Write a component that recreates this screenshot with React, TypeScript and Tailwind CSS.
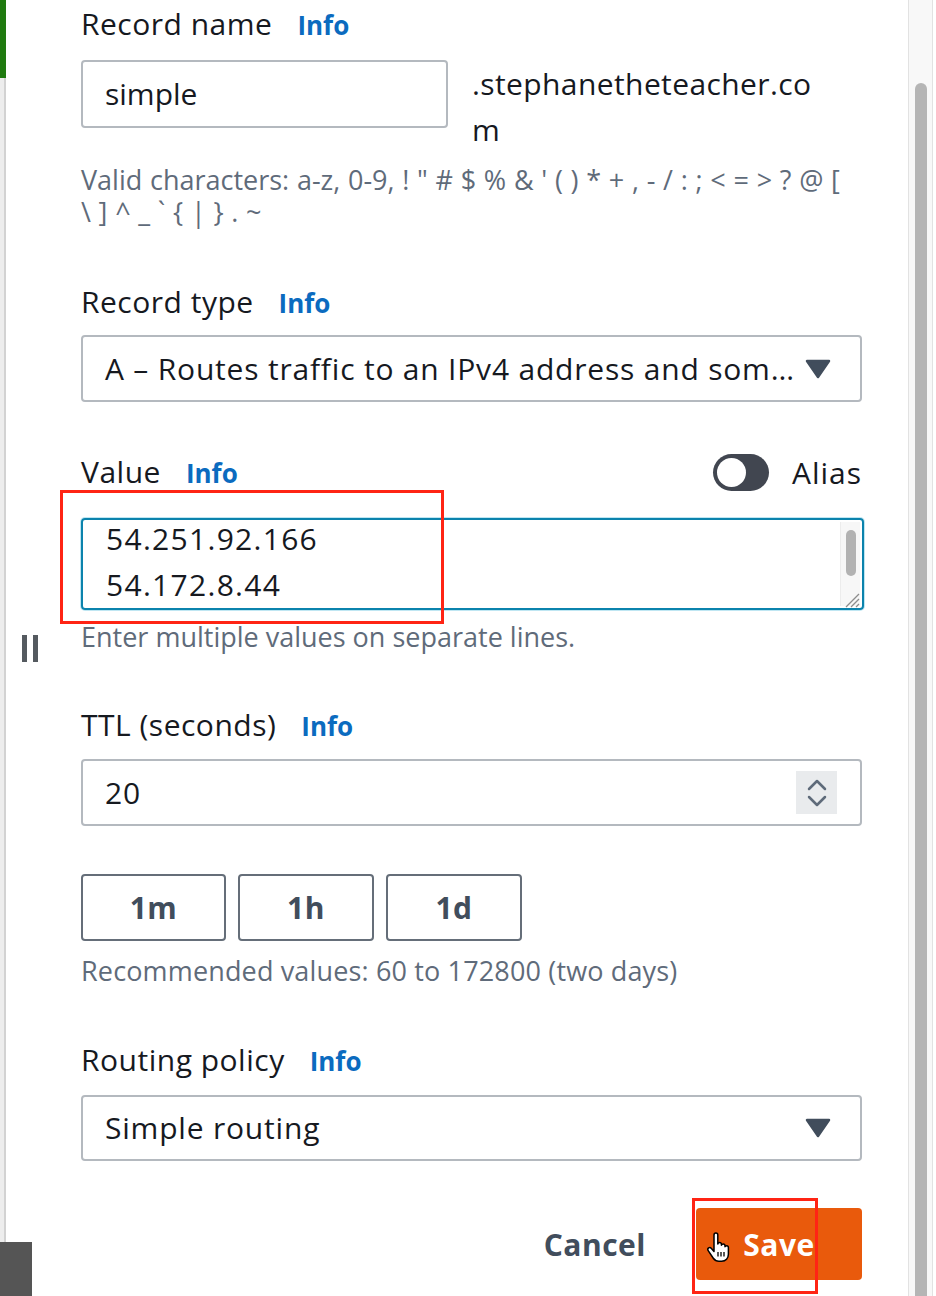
import type { ReactNode } from "react"

function Info() {
  return <span className="text-[26px] font-bold tracking-normal text-[#0b6bbf]">Info</span>
}

function Label({ children, className = "" }: { children: ReactNode; className?: string }) {
  return (
    <div className={`flex items-baseline gap-[25px] text-[30px] leading-[36px] text-[#16191f] ${className}`}>
      <span className="tracking-[0.5px]">{children}</span>
      <Info />
    </div>
  )
}

function Caret() {
  return (
    <svg width="26" height="20" viewBox="0 0 26 20" className="shrink-0">
      <polygon points="2,2 24,2 13,18" fill="#414d5c" stroke="#414d5c" strokeWidth="2.5" strokeLinejoin="round" />
    </svg>
  )
}

function Select({ text, className = "" }: { text: string; className?: string }) {
  return (
    <div
      className={`flex items-center justify-between rounded-[4px] border-2 border-[#b4b9bf] pl-[22px] pr-[29px] ${className}`}
    >
      <span className="whitespace-nowrap text-[30px] leading-[36px] tracking-[0.8px] text-[#16191f]">{text}</span>
      <Caret />
    </div>
  )
}

function Helper({ children, className = "" }: { children: ReactNode; className?: string }) {
  return <p className={`text-[27px] leading-[32px] text-[#5f6b7a] ${className}`}>{children}</p>
}

function HandCursor() {
  return (
    <svg width="26" height="30" viewBox="0 0 26 30" className="absolute left-[10px] top-[24px]">
      <path
        d="M8 3c0-1.2.9-2 1.9-2s1.9.8 1.9 2v9c.3-1 1-1.5 1.8-1.5 1 0 1.8.8 1.8 1.8v1c.3-.8 1-1.3 1.8-1.3 1 0 1.8.8 1.8 1.8v1c.3-.7 1-1.1 1.7-1.1 1 0 1.7.8 1.7 1.8v6.8c0 3.7-2.6 6.9-6.8 6.9h-2.7c-2.6 0-4.2-1-5.6-3L2.2 18.6c-.6-.9-.4-2.1.4-2.7.9-.6 2-.4 2.6.4L8 19.5z"
        fill="white"
        stroke="black"
        strokeWidth="1.5"
        strokeLinejoin="round"
      />
      <path d="M12 20v4.5M15 20v4.5M18 20v4.5" stroke="black" strokeWidth="1.3" />
    </svg>
  )
}

export default function App() {
  return (
    <div className="relative flex h-[1296px] w-[936px] overflow-hidden bg-white font-['Open_Sans',sans-serif]">
      {/* left gutter */}
      <div className="relative w-[81px] shrink-0">
        <div className="flex h-full w-[6px] flex-col">
          <div className="h-[78px] bg-[#1f7a0f]" />
          <div className="flex-1 border-r-2 border-[#d2d2d2] bg-[#ededed]" />
        </div>
        <div className="absolute left-[22px] top-[635px] flex gap-[6px]">
          <div className="h-[27px] w-[5px] bg-[#555a60]" />
          <div className="h-[27px] w-[5px] bg-[#555a60]" />
        </div>
        <div className="absolute bottom-0 left-0 h-[54px] w-[32px] bg-[#555555]" />
      </div>

      {/* form */}
      <div className="flex w-[781px] shrink-0 flex-col pt-[6px]">
        <Label>Record name</Label>
        <div className="mt-[17px] flex items-start gap-[24px]">
          <div className="flex h-[68px] w-[367px] items-center rounded-[4px] border-2 border-[#b4b9bf] pl-[22px]">
            <span className="text-[30px] leading-[36px] text-[#16191f]">simple</span>
          </div>
          <div className="pt-[1px] text-[30px] leading-[46px] tracking-[0.4px] text-[#16191f]">
            .stephanetheteacher.co
            <br />m
          </div>
        </div>
        <Helper className="mt-[11px] whitespace-nowrap [word-spacing:0.7px]">
          Valid characters: a-z, 0-9, ! " # $ % &amp; ' ( ) * + , - / : ; &lt; = &gt; ? @ [
          <br />
          \ ] ^ _ ` {"{"} | {"}"} . ~
        </Helper>

        <Label className="mt-[56px]">Record type</Label>
        <Select className="mt-[14px] h-[67px]" text="A – Routes traffic to an IPv4 address and som…" />

        <div className="mt-[52px] flex items-center justify-between">
          <Label>Value</Label>
          <div className="flex items-center gap-[23px]">
            <div className="flex h-[37px] w-[56px] items-center rounded-full bg-[#414650] pl-[4px]">
              <div className="h-[29px] w-[29px] rounded-full bg-white" />
            </div>
            <span className="text-[30px] leading-[36px] tracking-[1px] text-[#16191f]">Alias</span>
          </div>
        </div>
        <div className="relative mt-[27px]">
          <div className="flex h-[92px] w-[783px] overflow-hidden rounded-[4px] border-2 border-[#0b83ad] shadow-[0_0_0_1px_#bfe6f2]">
            <div className="-mt-[4px] flex-1 pl-[23px] text-[30px] leading-[46px] tracking-[1.3px] text-[#16191f]">
              <div>54.251.92.166</div>
              <div>54.172.8.44</div>
            </div>
            <div className="relative mr-[2px] mt-[2px] flex h-[84px] w-[20px] justify-center border-l border-[#ececec] bg-[#f7f7f7] pt-[8px]">
              <div className="h-[46px] w-[10px] rounded-full bg-[#b2b2b2]" />
              <svg width="20" height="20" viewBox="0 0 20 20" className="absolute -bottom-[2px] right-0">
                <path d="M19 6L6 19M19 11L11 19M19 16L16 19" stroke="#8d8d8d" strokeWidth="1.3" />
              </svg>
            </div>
          </div>
          <div className="absolute -left-[21px] -top-[28px] h-[134px] w-[384px] border-[3px] border-[#ff2414]" />
        </div>
        <Helper className="mt-[11px]">Enter multiple values on separate lines.</Helper>

        <Label className="mt-[54px]">TTL (seconds)</Label>
        <div className="mt-[15px] flex h-[67px] items-center justify-between rounded-[4px] border-2 border-[#b4b9bf] pl-[22px] pr-[23px]">
          <span className="text-[30px] leading-[36px] tracking-[0.8px] text-[#16191f]">20</span>
          <div className="flex h-[43px] w-[41px] items-center justify-center bg-[#e9ebed]">
            <svg width="20" height="30" viewBox="0 0 20 30">
              <path d="M2 11L10 3L18 11M2 19L10 27L18 19" fill="none" stroke="#5f6b7a" strokeWidth="2.5" strokeLinecap="round" strokeLinejoin="round" />
            </svg>
          </div>
        </div>

        <div className="mt-[48px] flex gap-[12px]">
          {[
            ["1m", "w-[145px]"],
            ["1h", "w-[136px]"],
            ["1d", "w-[136px]"],
          ].map(([t, w]) => (
            <div
              key={t}
              className={`flex h-[67px] items-center justify-center rounded-[4px] border-2 border-[#656e79] text-[30px] font-bold tracking-[0.5px] text-[#414d5c] ${w}`}
            >
              {t}
            </div>
          ))}
        </div>
        <Helper className="mt-[14px] tracking-[0.15px]">Recommended values: 60 to 172800 (two days)</Helper>

        <Label className="mt-[55px]">Routing policy</Label>
        <Select className="mt-[16px] h-[66px]" text="Simple routing" />

        <div className="mt-[47px] flex items-center justify-end gap-[50px]">
          <span className="text-[30px] font-bold tracking-[0.5px] text-[#414d5c]">Cancel</span>
          <div className="relative flex h-[72px] w-[166px] items-center justify-center rounded-[4px] bg-[#e95a0c]">
            <span className="text-[30px] font-bold tracking-[0.5px] text-white">Save</span>
            <HandCursor />
            <div className="absolute -left-[4px] -top-[10px] h-[96px] w-[126px] border-[3px] border-[#ff2414]" />
          </div>
        </div>
      </div>

      {/* page scrollbar */}
      <div className="ml-auto mr-[3px] flex w-[25px] justify-center border-x border-[#e2e2e2] bg-[#f8f8f8] pt-[83px]">
        <div className="w-[12px] rounded-t-full bg-[#b5b5b5]" />
      </div>
    </div>
  )
}
